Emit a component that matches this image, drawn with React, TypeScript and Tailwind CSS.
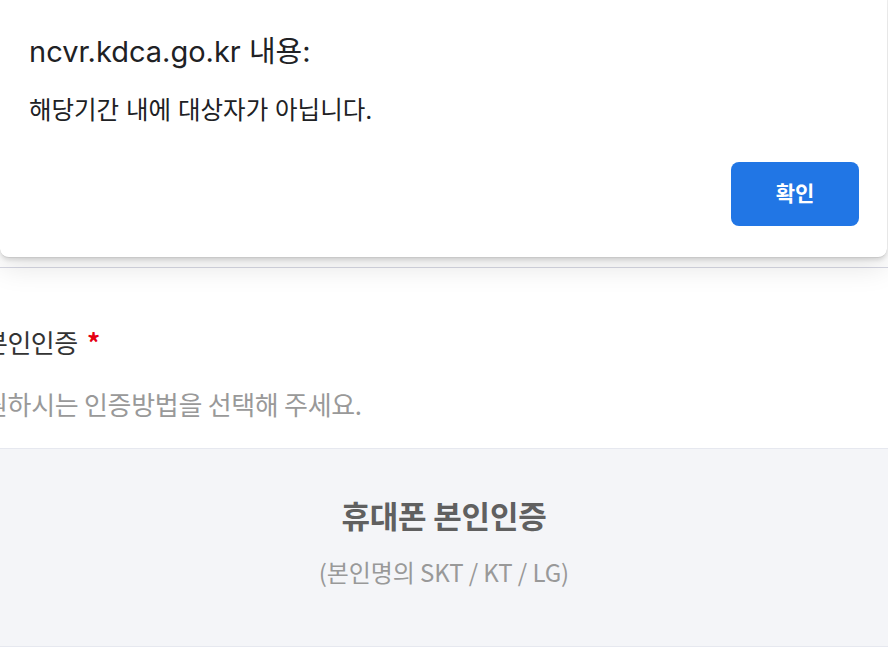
export default function App() {
  return (
    <div className="relative w-[888px] h-[656px] overflow-hidden bg-white [font-family:'Noto_Sans_CJK_KR',sans-serif]">
      {/* page underneath */}
      <div className="h-[268px] border-b border-[#d6d7e2]" />
      <div className="-ml-4 pt-[57px]">
        <h3 className="text-[26px] leading-[34px] tracking-[-0.5px] text-[#333]">
          본인인증 <span className="text-[#e60012] font-bold ml-1">*</span>
        </h3>
        <p className="mt-[28px] text-[26px] leading-[34px] tracking-[-0.3px] text-[#999]">
          원하시는 인증방법을 선택해 주세요.
        </p>
      </div>
      <div className="mt-[27px] h-[199px] border-y border-[#e6e8ef] bg-[#f4f5f8] flex flex-col items-center pt-[46px]">
        <div className="text-[31px] leading-[40px] font-bold tracking-[-0.2px] text-[#606060]">휴대폰 본인인증</div>
        <div className="mt-[21px] text-[24px] leading-[32px] tracking-[-0.1px] text-[#999]">(본인명의 SKT / KT / LG)</div>
      </div>

      {/* alert dialog */}
      <div className="absolute left-0 top-[-12px] w-[887px] h-[270px] bg-white rounded-[9px] border-b border-[#c9c9c9] shadow-[0_2px_4px_rgba(0,0,0,0.12),0_10px_28px_rgba(0,0,0,0.10)] [font-family:Inter,'Noto_Sans_CJK_KR',sans-serif]">
        <div className="pl-[29px] pt-[47px] text-[29px] leading-[34px] text-[#202124]">ncvr.kdca.go.kr 내용:</div>
        <div className="pl-[29px] mt-[25px] text-[24.5px] leading-[32px] text-[#202124]">해당기간 내에 대상자가 아닙니다.</div>
        <div className="flex justify-end pr-[28px] mt-[36px]">
          <button className="w-[128px] h-[64px] rounded-[8px] bg-[#2176e5] text-white text-[21px] font-bold">확인</button>
        </div>
      </div>
    </div>
  );
}
